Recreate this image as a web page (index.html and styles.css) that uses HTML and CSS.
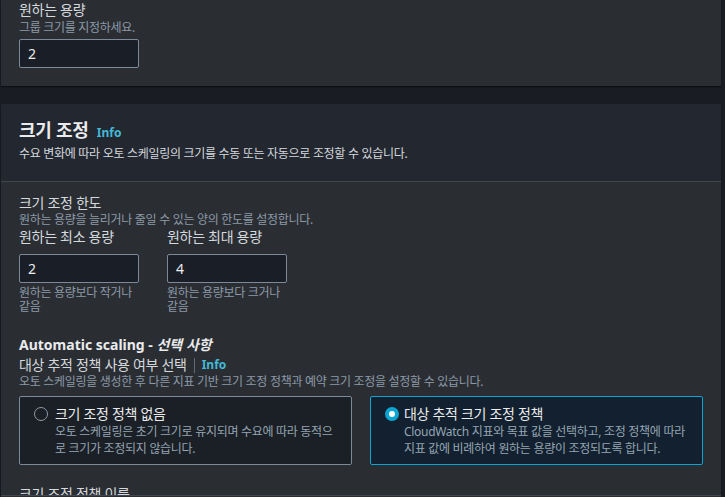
FILE: index.html
```html
<!DOCTYPE html>
<html lang="ko">
<head>
<meta charset="utf-8">
<link rel="stylesheet" href="styles.css">
</head>
<body>
<div class="page">
  <section class="card card-top">
    <div class="label">원하는 용량</div>
    <div class="desc">그룹 크기를 지정하세요.</div>
    <div class="input">2</div>
  </section>

  <section class="card">
    <header class="card-head">
      <h2 class="title">크기 조정 <span class="info">Info</span></h2>
      <p class="head-desc">수요 변화에 따라 오토 스케일링의 크기를 수동 또는 자동으로 조정할 수 있습니다.</p>
    </header>
    <div class="card-body">
      <div class="label">크기 조정 한도</div>
      <div class="desc">원하는 용량을 늘리거나 줄일 수 있는 양의 한도를 설정합니다.</div>
      <div class="limits">
        <div class="limit">
          <div class="label">원하는 최소 용량</div>
          <div class="input">2</div>
          <div class="help">원하는 용량보다 작거나 같음</div>
        </div>
        <div class="limit">
          <div class="label">원하는 최대 용량</div>
          <div class="input">4</div>
          <div class="help">원하는 용량보다 크거나 같음</div>
        </div>
      </div>

      <div class="auto-title">Automatic scaling - <em>선택 사항</em></div>
      <div class="label row-label">대상 추적 정책 사용 여부 선택<span class="divider"></span><span class="info">Info</span></div>
      <div class="desc">오토 스케일링을 생성한 후 다른 지표 기반 크기 조정 정책과 예약 크기 조정을 설정할 수 있습니다.</div>

      <div class="tiles">
        <div class="tile">
          <span class="radio"></span>
          <div class="tile-text">
            <div class="tile-title">크기 조정 정책 없음</div>
            <div class="tile-desc">오토 스케일링은 초기 크기로 유지되며 수요에 따라 동적으로 크기가 조정되지 않습니다.</div>
          </div>
        </div>
        <div class="tile tile-on">
          <span class="radio radio-on"></span>
          <div class="tile-text">
            <div class="tile-title">대상 추적 크기 조정 정책</div>
            <div class="tile-desc">CloudWatch 지표와 목표 값을 선택하고, 조정 정책에 따라 지표 값에 비례하여 원하는 용량이 조정되도록 합니다.</div>
          </div>
        </div>
      </div>

      <div class="label next-label">크기 조정 정책 이름</div>
    </div>
  </section>
</div>
<div class="sticky-footer"></div>
</body>
</html>
```

FILE: styles.css
```css
* { box-sizing: border-box; }
html, body {
  margin: 0;
  padding: 0;
  background: #191c23;
  height: 497px;
  overflow: hidden;
}
body {
  font-family: "Noto Sans", "Noto Sans CJK KR", sans-serif;
  color: #d5d9de;
  font-size: 14px;
}
.page {
  padding: 0 4px 0 1px;
  display: flex;
  flex-direction: column;
  gap: 18px;
}
.card {
  background: #2a2e33;
  box-shadow: 0 1px 1px rgba(0, 0, 0, 0.45);
}
.card-top {
  padding: 0 18px 18px;
  height: 86px;
}
.label {
  font-size: 14px;
  line-height: 18px;
  letter-spacing: -0.3px;
  color: #d5d9de;
}
.card-top .label { line-height: 20px; }
.desc {
  font-size: 12px;
  line-height: 16px;
  letter-spacing: -0.3px;
  color: #8d99a8;
}
.input {
  width: 120px;
  height: 29px;
  margin-top: 3px;
  background: #1a1f27;
  border: 1px solid #7d8998;
  border-radius: 2px;
  padding: 0 8px;
  font-size: 14px;
  line-height: 27px;
  color: #e9ebed;
}
.card-head {
  background: #232730;
  padding: 15px 18px 19px;
  border-bottom: 1px solid #414750;
}
.title {
  margin: 0;
  font-size: 18px;
  line-height: 22px;
  font-weight: 700;
  letter-spacing: -0.3px;
  color: #e9ebed;
}
.info {
  font-size: 12px;
  font-weight: 700;
  letter-spacing: 0;
  color: #44b9d6;
  margin-left: 4px;
}
.head-desc {
  margin: 2px 0 0;
  font-size: 12px;
  line-height: 16px;
  letter-spacing: -0.3px;
  color: #d5d9de;
}
.card-body {
  padding: 12px 18px 0;
}
.limits {
  display: flex;
  gap: 28px;
  margin-top: 0;
}
.limit { width: 120px; }
.limit .input { margin-top: 8px; }
.help {
  margin-top: 3px;
  font-size: 12px;
  line-height: 14px;
  letter-spacing: -0.3px;
  color: #8d99a8;
}
.auto-title {
  margin-top: 21px;
  font-size: 14px;
  line-height: 20px;
  font-weight: 700;
  color: #e9ebed;
}
.auto-title em { font-style: italic; }
.row-label {
  margin-top: 1px;
  display: flex;
  align-items: center;
}
.divider {
  display: inline-block;
  width: 1px;
  height: 15px;
  background: #5f6b7a;
  margin-left: 7px;
  margin-right: 3px;
}
.tiles {
  display: grid;
  grid-template-columns: 1fr 1fr;
  gap: 18px;
  margin-top: 6px;
}
.tile {
  display: flex;
  gap: 7px;
  border: 1px solid #7d8998;
  border-radius: 2px;
  background: #1b1f26;
  padding: 8px 14px 7px;
  height: 69px;
}
.tile-on {
  border-color: #0aa5d0;
  background: #12202f;
  padding-left: 14px;
  gap: 5px;
}
.radio {
  flex: none;
  width: 14px;
  height: 14px;
  margin-top: 2px;
  border-radius: 50%;
  border: 1.5px solid #8d99a8;
}
.radio-on {
  border: 4.5px solid #0aa5d0;
  background: #ffffff;
}
.tile-title {
  font-size: 14px;
  line-height: 18px;
  letter-spacing: -0.3px;
  color: #e9ebed;
}
.tile-desc {
  font-size: 12px;
  line-height: 17px;
  letter-spacing: -0.3px;
  color: #95a5b2;
}
.next-label {
  margin-top: 19px;
  line-height: 20px;
}
.sticky-footer {
  position: fixed;
  left: 1px;
  bottom: 0;
  width: 720px;
  height: 2px;
  border-top: 1px solid #414750;
  background: #2a2e33;
}
```
